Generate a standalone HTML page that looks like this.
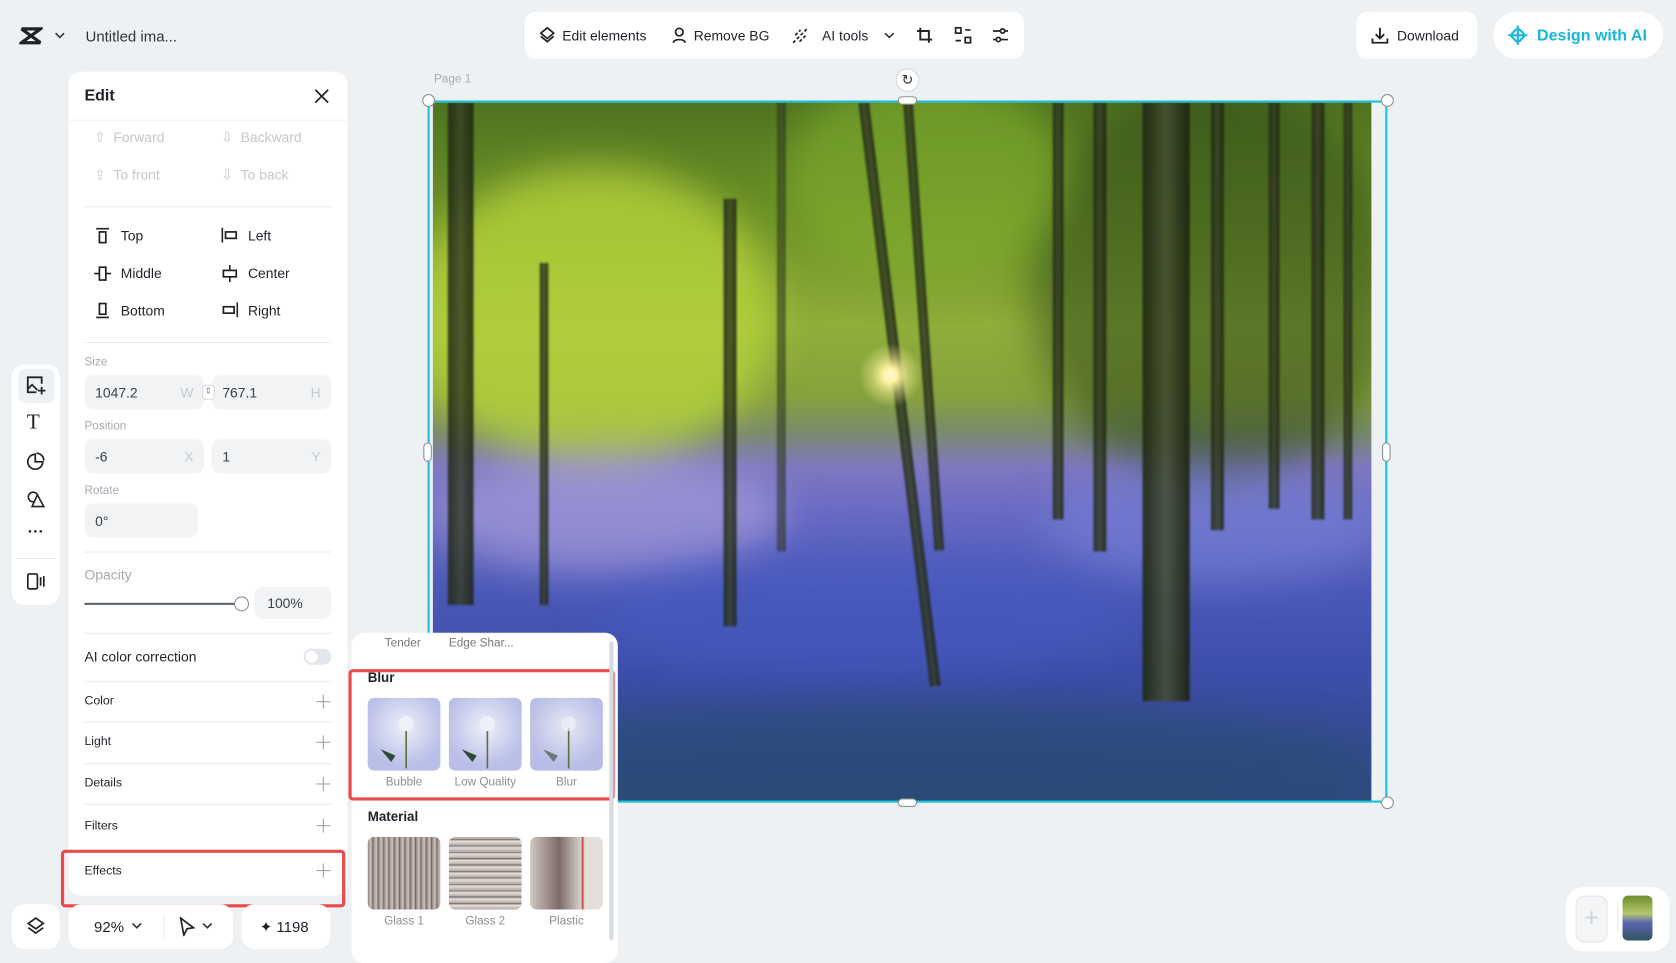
<!DOCTYPE html>
<html><head><meta charset="utf-8"><style>
*{box-sizing:border-box;margin:0;padding:0}
html,body{width:1676px;height:963px;overflow:hidden;background:#eef1f4;font-family:"Liberation Sans",sans-serif;color:#1f2329}
#w{position:absolute;left:0;top:0;width:1568px;height:901px;transform:scale(1.06888,1.0688);transform-origin:0 0}
.a{position:absolute}
.card{position:absolute;background:#fff;border-radius:12px}
.t{position:absolute;font-size:13px;white-space:nowrap}
.g{color:#c4c8cd}
.inp{position:absolute;background:#f1f3f5;border-radius:8px;height:32px;font-size:13px;color:#3a3f45;padding:9px 10px}
.inp span{position:absolute;right:10px;top:9px;color:#c7cbd0}
.hr{position:absolute;left:79px;width:231px;height:1px;background:#e8eaed}
.plus{position:absolute;left:296px;width:13px;height:13px}
.plus:before,.plus:after{content:"";position:absolute;background:#9aa0a6}
.plus:before{left:6px;top:0;width:1.3px;height:13px}
.plus:after{top:6px;left:0;height:1.3px;width:13px}
.red{position:absolute;border:3px solid #e84b4b;border-radius:4px}
.trunk{position:absolute;background:linear-gradient(90deg,rgba(30,38,18,.85),rgba(55,62,38,.8),rgba(26,32,14,.85));filter:blur(1px)}
.th{position:absolute;width:68px;height:68px;border-radius:6px}
.lab{position:absolute;font-size:11px;color:#8a8f96;width:68px;text-align:center}
.hd{position:absolute;width:12px;height:12px;border-radius:50%;background:#fff;border:1px solid #8a8f96}
.blob{position:absolute;border-radius:50%;filter:blur(18px)}
</style></head><body><div id="w">

<svg class="a" style="left:18px;top:25px" width="22" height="17" viewBox="0 0 22 17"><path d="M2 2h18L2 15h18M2 2l18 13" stroke="#1f2329" stroke-width="3" fill="none"/></svg>
<svg class="a" style="left:51px;top:29px" width="10" height="8"><path d="M1 2l4 4 4-4" stroke="#333" stroke-width="1.5" fill="none"/></svg>
<div class="t" style="left:80px;top:26px;font-size:14px;color:#333">Untitled ima...</div>

<div class="card" style="left:491px;top:11px;width:467px;height:44px;border-radius:10px"></div>
<svg class="a" style="left:504px;top:25px" width="16" height="16" viewBox="0 0 16 16"><path d="M8 1l6 5-6 5-6-5zM2 9l6 5 6-5" stroke="#222" stroke-width="1.6" fill="none"/></svg>
<div class="t" style="left:526px;top:26px">Edit elements</div>
<svg class="a" style="left:628px;top:25px" width="15" height="16" viewBox="0 0 15 16"><circle cx="7.5" cy="5" r="3.5" stroke="#222" stroke-width="1.6" fill="none"/><path d="M2 15c0-4 11-4 11 0" stroke="#222" stroke-width="1.6" fill="none"/></svg>
<div class="t" style="left:649px;top:26px">Remove BG</div>
<svg class="a" style="left:740px;top:25px" width="17" height="17" viewBox="0 0 17 17"><path d="M2 15L15 2M4 8l5-5M8 14l6-6" stroke="#222" stroke-width="1.6" fill="none" stroke-dasharray="3 2"/></svg>
<div class="t" style="left:769px;top:26px">AI tools</div>
<svg class="a" style="left:827px;top:30px" width="10" height="7"><path d="M1 1l4 4 4-4" stroke="#333" stroke-width="1.5" fill="none"/></svg>
<svg class="a" style="left:857px;top:25px" width="16" height="16" viewBox="0 0 16 16"><path d="M4 1v11h11M1 4h11v11" stroke="#222" stroke-width="1.8" fill="none"/></svg>
<svg class="a" style="left:893px;top:25px" width="16" height="16" viewBox="0 0 16 16"><rect x="1" y="1" width="5" height="5" stroke="#222" stroke-width="1.6" fill="none"/><rect x="10" y="10" width="5" height="5" stroke="#222" stroke-width="1.6" fill="none"/><path d="M10 3h5M1 13h5" stroke="#222" stroke-width="1.6"/></svg>
<svg class="a" style="left:928px;top:25px" width="16" height="16" viewBox="0 0 16 16"><path d="M1 4h14M1 12h14" stroke="#222" stroke-width="1.6"/><circle cx="10" cy="4" r="2" fill="#fff" stroke="#222" stroke-width="1.6"/><circle cx="6" cy="12" r="2" fill="#fff" stroke="#222" stroke-width="1.6"/></svg>

<div class="card" style="left:1269px;top:11px;width:113px;height:44px;border-radius:10px"></div>
<svg class="a" style="left:1283px;top:25px" width="16" height="16" viewBox="0 0 16 16"><path d="M8 1v10M4 7l4 4 4-4M1 11v4h14v-4" stroke="#222" stroke-width="1.7" fill="none"/></svg>
<div class="t" style="left:1307px;top:26px">Download</div>
<div class="card" style="left:1397px;top:11px;width:159px;height:44px;border-radius:22px"></div>
<svg class="a" style="left:1410px;top:23px" width="20" height="20" viewBox="0 0 20 20"><path d="M10 1v18M1 10h18" stroke="#1ab8dc" stroke-width="2"/><rect x="5" y="5" width="10" height="10" rx="3" stroke="#1ab8dc" stroke-width="2" fill="none" transform="rotate(45 10 10)"/></svg>
<div class="t" style="left:1438px;top:25px;font-size:15px;font-weight:bold;color:#16b6db">Design with AI</div>

<div class="card" style="left:64px;top:67px;width:261px;height:771px"></div>
<div class="t" style="left:79px;top:81px;font-size:15px;font-weight:bold">Edit</div>
<svg class="a" style="left:294px;top:83px" width="14" height="14"><path d="M1 1l12 12M13 1L1 13" stroke="#222" stroke-width="1.6"/></svg>
<div class="a" style="left:64px;top:112px;width:261px;height:1px;background:#eef0f2"></div>
<div class="t g" style="left:88px;top:121px">⇧ &nbsp;Forward</div>
<div class="t g" style="left:207px;top:121px">⇩ &nbsp;Backward</div>
<div class="t g" style="left:88px;top:156px">⇪ &nbsp;To front</div>
<div class="t g" style="left:207px;top:156px">⇩ &nbsp;To back</div>
<div class="hr" style="top:193px"></div>
<svg class="a" style="left:89px;top:213px" width="14" height="16"><path d="M1 1h12" stroke="#222" stroke-width="1.5"/><rect x="4" y="4" width="6" height="10" stroke="#222" stroke-width="1.6" fill="none"/></svg>
<div class="t" style="left:113px;top:213px">Top</div>
<svg class="a" style="left:207px;top:213px" width="16" height="14"><path d="M1 0v14" stroke="#222" stroke-width="1.5"/><rect x="4" y="4" width="10" height="6" stroke="#222" stroke-width="1.6" fill="none"/></svg>
<div class="t" style="left:232px;top:213px">Left</div>
<svg class="a" style="left:88px;top:248px" width="16" height="16"><path d="M0 8h16" stroke="#222" stroke-width="1.5"/><rect x="5" y="2" width="6" height="12" stroke="#222" stroke-width="1.6" fill="#fff"/></svg>
<div class="t" style="left:113px;top:248px">Middle</div>
<svg class="a" style="left:207px;top:248px" width="16" height="16"><path d="M8 0v16" stroke="#222" stroke-width="1.5"/><rect x="2" y="5" width="12" height="6" stroke="#222" stroke-width="1.6" fill="#fff"/></svg>
<div class="t" style="left:232px;top:248px">Center</div>
<svg class="a" style="left:89px;top:282px" width="14" height="16"><path d="M1 15h12" stroke="#222" stroke-width="1.5"/><rect x="4" y="2" width="6" height="10" stroke="#222" stroke-width="1.6" fill="none"/></svg>
<div class="t" style="left:113px;top:283px">Bottom</div>
<svg class="a" style="left:207px;top:283px" width="16" height="14"><path d="M15 0v14" stroke="#222" stroke-width="1.5"/><rect x="2" y="4" width="10" height="6" stroke="#222" stroke-width="1.6" fill="none"/></svg>
<div class="t" style="left:232px;top:283px">Right</div>
<div class="hr" style="top:320px"></div>
<div class="t g" style="left:79px;top:333px;font-size:11px;color:#a5aab0">Size</div>
<div class="inp" style="left:79px;top:351px;width:112px">1047.2<span>W</span></div>
<div class="inp" style="left:198px;top:351px;width:112px">767.1<span>H</span></div>
<div class="a" style="left:189px;top:360px;width:12px;height:14px;background:#fff;border:1px solid #d8dbe0;border-radius:3px;font-size:8px;text-align:center;color:#888">⇕</div>
<div class="t" style="left:79px;top:393px;font-size:11px;color:#a5aab0">Position</div>
<div class="inp" style="left:79px;top:411px;width:112px">-6<span>X</span></div>
<div class="inp" style="left:198px;top:411px;width:112px">1<span>Y</span></div>
<div class="t" style="left:79px;top:453px;font-size:11px;color:#a5aab0">Rotate</div>
<div class="inp" style="left:79px;top:471px;width:106px">0°</div>
<div class="hr" style="top:516px"></div>
<div class="t" style="left:79px;top:530px;color:#a5aab0">Opacity</div>
<div class="a" style="left:79px;top:564px;width:146px;height:2px;background:#5f6670"></div>
<div class="a" style="left:219px;top:558px;width:14px;height:14px;border-radius:50%;background:#fff;border:1px solid #8a9099"></div>
<div class="inp" style="left:238px;top:549px;width:72px;height:30px;padding:8px 12px">100%</div>
<div class="hr" style="top:592px"></div>
<div class="t" style="left:79px;top:607px">AI color correction</div>
<div class="a" style="left:284px;top:607px;width:26px;height:15px;border-radius:8px;background:#e3e6ea"><div class="a" style="left:2px;top:2px;width:11px;height:11px;border-radius:50%;background:#fff"></div></div>
<div class="hr" style="top:637px"></div>
<div class="t" style="left:79px;top:650px;font-size:11.5px">Color</div><div class="plus" style="top:650px"></div>
<div class="hr" style="top:675px"></div>
<div class="t" style="left:79px;top:688px;font-size:11.5px">Light</div><div class="plus" style="top:688px"></div>
<div class="hr" style="top:714px"></div>
<div class="t" style="left:79px;top:727px;font-size:11.5px">Details</div><div class="plus" style="top:727px"></div>
<div class="hr" style="top:752px"></div>
<div class="t" style="left:79px;top:767px;font-size:11.5px">Filters</div><div class="plus" style="top:766px"></div>
<div class="t" style="left:79px;top:809px;font-size:11.5px">Effects</div><div class="plus" style="top:808px"></div>
<div class="red" style="left:57px;top:795px;width:266px;height:54px"></div>

<div class="card" style="left:11px;top:341px;width:45px;height:225px"></div>
<div class="a" style="left:17px;top:345px;width:34px;height:32px;border-radius:7px;background:#eef1f4"></div>
<svg class="a" style="left:24px;top:351px" width="19" height="19" viewBox="0 0 19 19"><path d="M15 8V2H2v14h8" stroke="#222" stroke-width="1.7" fill="none"/><path d="M2 13l4-4 5 5" stroke="#222" stroke-width="1.6" fill="none"/><path d="M15 11v7M11.5 14.5h7" stroke="#222" stroke-width="1.7"/></svg>
<div class="t" style="left:25px;top:384px;font-size:20px;font-family:'Liberation Serif',serif">T</div>
<svg class="a" style="left:25px;top:423px" width="17" height="17"><path d="M8 2a7 7 0 1 0 7 7h-7z" stroke="#222" stroke-width="1.6" fill="none"/><path d="M9 1a7 7 0 0 1 7 7" stroke="#222" stroke-width="1.6" fill="none"/></svg>
<svg class="a" style="left:25px;top:458px" width="17" height="17"><circle cx="6" cy="7" r="4.5" stroke="#222" stroke-width="1.5" fill="none"/><path d="M10 5l6 11H5z" stroke="#222" stroke-width="1.5" fill="#fff"/></svg>
<div class="t" style="left:26px;top:489px;font-size:15px;font-weight:bold">···</div>
<div class="a" style="left:15px;top:522px;width:37px;height:1px;background:#e6e8eb"></div>
<svg class="a" style="left:25px;top:536px" width="18" height="16"><rect x="1" y="1" width="9" height="14" rx="1.5" stroke="#222" stroke-width="1.6" fill="none"/><path d="M13 4v8M16 3v10" stroke="#222" stroke-width="1.6"/></svg>

<div class="card" style="left:11px;top:846px;width:45px;height:42px"></div>
<svg class="a" style="left:25px;top:858px" width="17" height="18"><path d="M8.5 1l7 5-7 5-7-5z" stroke="#222" stroke-width="1.6" fill="none"/><path d="M1.5 10l7 5 7-5" stroke="#222" stroke-width="1.6" fill="none"/></svg>
<div class="card" style="left:64px;top:846px;width:154px;height:42px"></div>
<div class="t" style="left:88px;top:859px;font-size:14px">92%</div>
<svg class="a" style="left:123px;top:863px" width="10" height="7"><path d="M1 1l4 4 4-4" stroke="#333" stroke-width="1.5" fill="none"/></svg>
<div class="a" style="left:153px;top:856px;width:1px;height:22px;background:#e6e8eb"></div>
<svg class="a" style="left:167px;top:858px" width="16" height="18"><path d="M2 1l12 9-6 1-3 6z" stroke="#222" stroke-width="1.6" fill="none"/></svg>
<svg class="a" style="left:189px;top:863px" width="10" height="7"><path d="M1 1l4 4 4-4" stroke="#333" stroke-width="1.5" fill="none"/></svg>
<div class="card" style="left:226px;top:846px;width:83px;height:42px"></div>
<div class="t" style="left:243px;top:859px;font-size:14px">✦ 1198</div>

<div class="t" style="left:406px;top:68px;font-size:11px;color:#a8adb3">Page 1</div>
<div class="a" style="left:405px;top:96px;width:878px;height:654px;overflow:hidden;background:
linear-gradient(180deg,#4f7420 0%,#6f9428 18%,#8fae3a 32%,#86a23c 42%,#7a8c6a 47%,#7f78c0 52%,#6a6cc4 58%,#4a58b6 70%,#3c4ea8 82%,#2e4a80 100%)">
 <div class="blob" style="left:-20px;top:60px;width:340px;height:280px;background:rgba(185,215,60,.75)"></div>
 <div class="blob" style="left:560px;top:-20px;width:340px;height:380px;background:rgba(50,75,25,.55)"></div>
 <div class="blob" style="left:330px;top:-30px;width:260px;height:200px;background:rgba(130,175,45,.6)"></div>
 <div class="blob" style="left:0;top:330px;width:330px;height:110px;background:rgba(170,160,220,.65)"></div>
 <div class="blob" style="left:570px;top:340px;width:320px;height:110px;background:rgba(120,130,215,.55)"></div>
 <div class="blob" style="left:150px;top:420px;width:500px;height:120px;background:rgba(70,90,200,.45)"></div>
 <div class="blob" style="left:0;top:560px;width:878px;height:120px;background:rgba(40,75,110,.55)"></div>
 <div class="trunk" style="left:14px;top:0;width:24px;height:470px"></div>
 <div class="trunk" style="left:100px;top:150px;width:8px;height:320px"></div>
 <div class="trunk" style="left:272px;top:90px;width:12px;height:400px"></div>
 <div class="trunk" style="left:322px;top:0;width:8px;height:420px;opacity:.7"></div>
 <div class="trunk" style="left:398px;top:0;width:10px;height:550px;transform:rotate(-7deg);transform-origin:top"></div>
 <div class="trunk" style="left:440px;top:0;width:9px;height:420px;transform:rotate(-4deg);transform-origin:top"></div>
 <div class="trunk" style="left:580px;top:0;width:10px;height:390px"></div>
 <div class="trunk" style="left:618px;top:0;width:12px;height:420px"></div>
 <div class="trunk" style="left:664px;top:0;width:44px;height:560px;background:linear-gradient(90deg,rgba(30,38,18,.9),rgba(70,80,50,.85),rgba(26,32,14,.9))"></div>
 <div class="trunk" style="left:728px;top:0;width:12px;height:400px"></div>
 <div class="trunk" style="left:782px;top:0;width:10px;height:380px"></div>
 <div class="trunk" style="left:822px;top:0;width:12px;height:390px"></div>
 <div class="trunk" style="left:852px;top:0;width:8px;height:390px"></div>
 <div class="a" style="left:398px;top:225px;width:60px;height:60px;border-radius:50%;background:radial-gradient(circle,#fffbe6 0,#fff3a0 15%,rgba(240,235,150,.5) 40%,rgba(220,230,140,0) 70%)"></div>
</div>
<div class="a" style="left:400px;top:94px;width:898px;height:657px;border:2px solid #19c1dc"></div>
<div class="hd" style="left:395px;top:88px"></div><div class="hd" style="left:1292px;top:88px"></div>
<div class="hd" style="left:395px;top:745px"></div><div class="hd" style="left:1292px;top:745px"></div>
<div class="a" style="left:840px;top:90px;width:18px;height:8px;border-radius:4px;background:#fff;border:1px solid #8a8f96"></div>
<div class="a" style="left:840px;top:747px;width:18px;height:8px;border-radius:4px;background:#fff;border:1px solid #8a8f96"></div>
<div class="a" style="left:396px;top:414px;width:8px;height:18px;border-radius:4px;background:#fff;border:1px solid #8a8f96"></div>
<div class="a" style="left:1293px;top:414px;width:8px;height:18px;border-radius:4px;background:#fff;border:1px solid #8a8f96"></div>
<div class="a" style="left:838px;top:64px;width:22px;height:22px;border-radius:50%;background:#fff;border:1px solid #d5d8dc;text-align:center;font-size:13px;line-height:20px;color:#333">↻</div>

<div class="card" style="left:329px;top:592px;width:249px;height:309px"></div>
<div class="t" style="left:360px;top:596px;font-size:11px;color:#777">Tender</div>
<div class="t" style="left:420px;top:596px;font-size:11px;color:#777">Edge Shar...</div>
<div class="t" style="left:344px;top:627px;font-weight:bold;font-size:12.5px">Blur</div>
<div class="th" style="left:344px;top:653px;background:radial-gradient(circle at 50% 40%,#eef0f8,#b9bfe8 70%)"></div>
<div class="th" style="left:420px;top:653px;background:radial-gradient(circle at 50% 40%,#eef0f8,#b9bfe8 70%)"></div>
<div class="th" style="left:496px;top:653px;background:radial-gradient(circle at 50% 40%,#e6e8f4,#b7bde6 70%)"></div>
<svg class="a" style="left:344px;top:653px" width="220" height="68"><g fill="#2e4a34"><path d="M12 48l10 12 4-6z"/><path d="M88 48l10 12 4-6z"/><path d="M164 48l10 12 4-6z" opacity=".6"/></g><g stroke="#5a7040" stroke-width="1.5"><path d="M36 28v38M112 28v38M188 28v38"/></g><g fill="#eef1f6"><circle cx="36" cy="24" r="7"/><circle cx="112" cy="24" r="7"/><circle cx="188" cy="24" r="7" opacity=".7"/></g></svg>
<div class="lab" style="left:344px;top:726px">Bubble</div>
<div class="lab" style="left:420px;top:726px">Low Quality</div>
<div class="lab" style="left:496px;top:726px">Blur</div>
<div class="red" style="left:326px;top:626px;width:249px;height:123px"></div>
<div class="t" style="left:344px;top:757px;font-weight:bold;font-size:12.5px">Material</div>
<div class="th" style="left:344px;top:783px;background:repeating-linear-gradient(90deg,#8e7f7d 0,#cfc6c2 3px,#6e5d5b 5px),#b9a9a5"></div>
<div class="th" style="left:420px;top:783px;background:repeating-linear-gradient(0deg,#b3a9a4 0,#e6dfdb 4px,#6d605c 6px),#a69692"></div>
<div class="th" style="left:496px;top:783px;background:linear-gradient(90deg,#cfc7c2,#7c6a68 40%,#d8d1cc 70%,#b9413b 72%,#e5dfdb 75%)"></div>
<div class="lab" style="left:344px;top:856px">Glass 1</div>
<div class="lab" style="left:420px;top:856px">Glass 2</div>
<div class="lab" style="left:496px;top:856px">Plastic</div>
<div class="a" style="left:570px;top:600px;width:4px;height:280px;background:#d8dbe0;border-radius:2px"></div>

<div class="card" style="left:1465px;top:830px;width:97px;height:60px;border-radius:16px"></div>
<div class="a" style="left:1474px;top:838px;width:30px;height:44px;border-radius:8px;background:#f3f5f7;border:1px solid #e4e7ea;text-align:center;font-size:24px;line-height:42px;color:#cfd3d8">+</div>
<div class="a" style="left:1513px;top:847px;width:1px;height:24px;background:#e4e7ea"></div>
<div class="a" style="left:1518px;top:838px;width:28px;height:42px;border-radius:5px;background:linear-gradient(180deg,#6d8e2a,#b7c770 40%,#5d64b0 60%,#2f5560)"></div>
</div></body></html>
